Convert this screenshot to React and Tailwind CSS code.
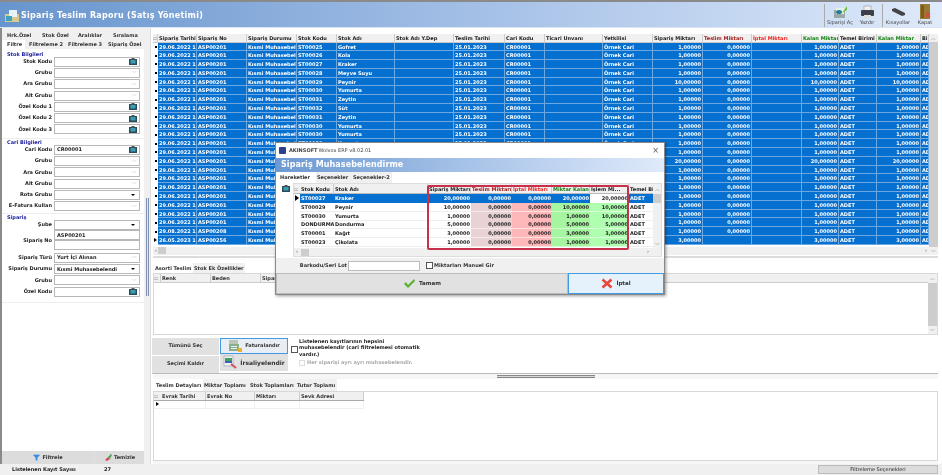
import { Filter } from 'lucide-react';

const MAIN_COLS = 'grid grid-cols-[5px_39px_50px_50px_40px_58px_59px_51px_40px_58px_50px_50px_49px_50px_37px_38px_44px_8px]';
const MODAL_COLS = 'grid grid-cols-[6px_34px_94px_43px_41px_40px_38px_39px_24px]';
const SUB_COLS = 'grid grid-cols-[7px_45px_49px_45px_64px]';
const ASORTI_COLS = 'grid grid-cols-[6px_50px_50px_50px]';

const mainHeaders = [
  ['Sipariş Tarihi'], ['Sipariş No'], ['Sipariş Durumu'], ['Stok Kodu'], ['Stok Adı'], ['Stok Adı Y.Dep'],
  ['Teslim Tarihi'], ['Cari Kodu'], ['Ticari Unvanı'], ['Yetkilisi'], ['Sipariş Miktarı'],
  ['Teslim Miktarı', 'text-[#a02020]'], ['İptal Miktarı', 'text-[#f02020]'], ['Kalan Miktar', 'text-[#108010]'],
  ['Temel Birimi'], ['Kalan Miktar', 'text-[#108010]'], ['Bi'],
];

const stock = [
  ['ST00025', 'Gofret', 1], ['ST00026', 'Kola', 1], ['ST00027', 'Kraker', 1], ['ST00028', 'Meyve Suyu', 1],
  ['ST00029', 'Peynir', 10], ['ST00030', 'Yumurta', 1], ['ST00031', 'Zeytin', 1], ['ST00032', 'Süt', 1],
  ['ST00031', 'Zeytin', 1], ['ST00030', 'Yumurta', 1], ['ST00030', 'Yumurta', 1], ['ST00030', 'Yumurta', 1],
  ['ST00029', 'Peynir', 1], ['ST00027', 'Kraker', 20], ['ST00030', 'Yumurta', 1], ['DONDURMA', 'Dondurma', 1],
  ['ST00001', 'Kağıt', 1], ['ST00023', 'Çikolata', 1], ['ST00031', 'Zeytin', 1], ['ST00032', 'Süt', 1],
  ['ST00025', 'Gofret', 1], ['ST00026', 'Kola', 1], ['ST00027', 'Kraker', 3],
];

const modalRows = [
  ['ST00027', 'Kraker', '20,00000', '20,00000', '20,00000'],
  ['ST00029', 'Peynir', '10,00000', '10,00000', '10,00000'],
  ['ST00030', 'Yumurta', '1,00000', '1,00000', '10,00000'],
  ['DONDURMA', 'Dondurma', '5,00000', '5,00000', '5,00000'],
  ['ST00001', 'Kağıt', '3,00000', '3,00000', '3,00000'],
  ['ST00023', 'Çikolata', '1,00000', '1,00000', '1,00000'],
];

const cell = 'overflow-hidden whitespace-nowrap px-px leading-[8px] border-r border-[#6ea8e0]';

const Lookup = () => (
  <svg width="8" height="7" viewBox="0 0 8 7" className="shrink-0">
    <rect x="0" y="1" width="8" height="6" fill="#2c4a5a" />
    <rect x="1.5" y="2" width="5" height="3.5" fill="#38a0b0" />
    <rect x="2.5" y="0" width="3" height="1.5" fill="#555" />
  </svg>
);

const FieldBox = ({ value, kind }) => (
  <div className="ml-[2px] w-[86px] h-[10px] bg-white border border-[#b8b8b8] flex items-center justify-between pl-[2px] pr-[2px]">
    <span className="text-[5px] font-bold text-[#222] leading-none whitespace-nowrap">{value}</span>
    {kind === 'lookup' && <Lookup />}
    {kind === 'chevron' && <span className="text-[#999] text-[5px] leading-none">﹀</span>}
    {kind === 'drop' && <span className="w-0 h-0 border-x-[2px] border-x-transparent border-t-[2px] border-t-black mr-[2px]" />}
  </div>
);

const Field = ({ label, value, kind }) => (
  <div className="flex items-center h-[11.3px]">
    <span className="w-[50px] shrink-0 text-right text-[5px] font-bold text-[#222] whitespace-nowrap">{label}</span>
    <FieldBox value={value} kind={kind} />
  </div>
);

const Legend = ({ children }) => (
  <div className="text-[5px] font-bold text-[#2020a0] pl-[5px] leading-[6px] h-[6px] -mb-px">{children}</div>
);

const Sidebar = () => (
  <aside className="w-[144px] shrink-0 flex flex-col border-l-2 border-[#8a8a8a]">
    <div className="flex-1 bg-white flex flex-col">
      <div className="bg-[#f0f0f0] pt-[3px] text-[5px] font-bold text-[#333]">
        <div className="h-[9px] flex items-center whitespace-nowrap">
          <span className="w-[40px] pl-[5px]">Hrk.Özel</span>
          <span className="w-[36px]">Stok Özel</span>
          <span className="w-[35px]">Aralıklar</span>
          <span>Sıralama</span>
        </div>
        <div className="h-[9px] flex items-center whitespace-nowrap">
          <span className="bg-white h-full flex items-center pl-[5px] w-[23px]">Filtre</span>
          <span className="w-[39px] pl-[4px]">Filtreleme 2</span>
          <span className="w-[40px] pl-[4px]">Filtreleme 3</span>
          <span className="pl-[4px]">Sipariş Özel</span>
        </div>
      </div>
      <div className="pt-[2px] flex flex-col">
        <div className="border-b border-[#eee] pb-[3px]">
          <Legend>Stok Bilgileri</Legend>
          <Field label="Stok Kodu" kind="lookup" />
          <Field label="Grubu" kind="chevron" />
          <Field label="Ara Grubu" kind="chevron" />
          <Field label="Alt Grubu" kind="chevron" />
          <Field label="Özel Kodu 1" kind="lookup" />
          <Field label="Özel Kodu 2" kind="lookup" />
          <Field label="Özel Kodu 3" kind="lookup" />
        </div>
        <div className="border-b border-[#eee] pb-[1px]">
          <Legend>Cari Bilgileri</Legend>
          <Field label="Cari Kodu" value="CR00001" kind="lookup" />
          <Field label="Grubu" kind="chevron" />
          <Field label="Ara Grubu" kind="chevron" />
          <Field label="Alt Grubu" kind="chevron" />
          <Field label="Rota Grubu" kind="drop" />
          <Field label="E-Fatura Kullan" kind="chevron" />
        </div>
        <div className="border-b border-[#eee] pb-[5px]">
          <Legend>Sipariş</Legend>
          <Field label="Şube" kind="drop" />
          <div className="flex items-center h-[22px]">
            <span className="w-[50px] shrink-0 text-right text-[5px] font-bold text-[#222] whitespace-nowrap">Sipariş No</span>
            <div className="flex flex-col self-start">
              <FieldBox value="ASP00201" />
              <FieldBox />
            </div>
          </div>
          <Field label="Sipariş Türü" value="Yurt İçi Alınan" kind="chevron" />
          <Field label="Sipariş Durumu" value="Kısmi Muhasebelendi" kind="drop" />
          <Field label="Grubu" kind="chevron" />
          <Field label="Özel Kodu" kind="lookup" />
        </div>
      </div>
    </div>
    <div className="h-[13px] flex gap-px bg-[#e0e0e0] text-[5px] font-bold text-[#333]">
      <div className="w-[92px] bg-[#dcdcdc] flex items-center justify-center gap-[2px]">
        <Filter size={7} className="text-[#3a8ee0] fill-[#3a8ee0]" />
        Filtrele
      </div>
      <div className="flex-1 bg-[#dcdcdc] flex items-center justify-center gap-[2px]">
        <svg width="8" height="7" viewBox="0 0 8 7">
          <path d="M1 6 L4 3 L6 5 L3 7 Z" fill="#d05050" />
          <path d="M4 3 L7 0 L8 1 L6 5 Z" fill="#50a060" />
        </svg>
        Temizle
      </div>
    </div>
  </aside>
);

const VBar = ({ thumbTop }) => (
  <div className="w-[9px] shrink-0 bg-[#f0f0f0] flex flex-col items-center text-[#555]">
    <span className="h-[8px] text-[5px] leading-[8px]">︿</span>
    <div className={`w-full flex-1 bg-[#cdcdcd] ${thumbTop ? 'mt-[1px]' : ''}`} />
    <span className="h-[8px] text-[5px] leading-[8px]">﹀</span>
  </div>
);

const MainGrid = () => (
  <div className="h-[221px] ml-[2px] mr-[4px] mt-[1.5px] flex bg-white">
    <div className="flex-1 min-w-0 flex flex-col">
      <div className={`${MAIN_COLS} h-[9px] bg-[#f0f0f0] border-b border-[#c8c8c8] text-[5px] font-bold text-[#222]`}>
        <span className="border-r border-[#ccc] text-[#888] leading-[8px]">::</span>
        {mainHeaders.map(([title, color], i) => (
          <span key={i} className={`overflow-hidden whitespace-nowrap px-px leading-[8px] border-r border-[#ccc] ${color || ''}`}>{title}</span>
        ))}
      </div>
      <div className="flex-1 min-h-0">
        {stock.map(([code, name, qty], i) => {
          const last = i === stock.length - 1;
          const order = i === 22 ? 'ASP00256' : i === 21 ? 'ASP00208' : 'ASP00201';
          const date = i === 22 ? '26.05.2023 16:14' : i === 21 ? '29.08.2022 13:02' : '29.06.2022 13:24';
          const amount = `${qty},00000`;
          return (
            <div key={i} className={`${MAIN_COLS} h-[8.8px] text-[5px] font-bold text-white`}>
              <span className="bg-white flex items-center justify-center">
                {last
                  ? <span className="w-0 h-0 border-y-[2px] border-y-transparent border-l-[3px] border-l-black" />
                  : <span className="w-[2px] h-[2px] bg-black" />}
              </span>
              {[date, order, 'Kısmi Muhasebelendi', code, name, '', '25.01.2023', 'CR00001', '', 'Örnek Cari'].map((v, k) => (
                <span key={k} className={`${cell} bg-[#0670d1] border-b`}>{v}</span>
              ))}
              <span className={`${cell} bg-[#0670d1] border-b text-right`}>{amount}</span>
              <span className={`${cell} bg-[#0670d1] border-b text-right`}>{last ? '' : '0,00000'}</span>
              <span className={`${cell} bg-[#0670d1] border-b`} />
              <span className={`${cell} bg-[#0670d1] border-b text-right`}>{amount}</span>
              <span className={`${cell} bg-[#0670d1] border-b`}>ADET</span>
              <span className={`${cell} bg-[#0670d1] border-b text-right`}>{amount}</span>
              <span className={`${cell} bg-[#0670d1] border-b`}>ADET</span>
            </div>
          );
        })}
      </div>
      <div className="h-[8px] bg-[#f0f0f0] flex items-center justify-between text-[#555] text-[5px] px-[2px]">
        <div className="flex items-center gap-[1px]"><span>‹</span><span className="w-[8px] h-[7px] bg-[#cdcdcd]" /></div>
        <span>›</span>
      </div>
    </div>
    <VBar />
  </div>
);

const AsortiPanel = () => (
  <div className="mt-[5px] ml-[2px] mr-[4px] h-[73px] flex flex-col bg-white">
    <div className="h-[10px] flex text-[5px] font-bold text-[#333] leading-[10px] bg-white whitespace-nowrap">
      <span className="pl-[2px] bg-white w-[40px]">Asorti Teslim</span>
      <span className="px-[1px] bg-[#f0f0f0]">Stok Ek Özellikler</span>
    </div>
    <div className="flex-1 flex border border-[#d8d8d8] mb-px">
      <div className="flex-1">
        <div className={`${ASORTI_COLS} h-[9px] bg-[#f0f0f0] border-b border-[#ccc] text-[5px] font-bold text-[#333] leading-[8px]`}>
          <span className="text-[#888]">::</span>
          <span className="px-px border-l border-[#ccc]">Renk</span>
          <span className="px-px border-l border-[#ccc]">Beden</span>
          <span className="px-px border-l border-[#ccc]">Sipariş</span>
        </div>
      </div>
      <VBar thumbTop />
    </div>
  </div>
);

const ActionButtons = () => (
  <div className="h-[38px] ml-[1px] mr-[4px] flex bg-white border-b border-[#bbb] text-[5px] font-bold text-[#333]">
    <div className="w-[67px] flex flex-col gap-px pt-[2px]">
      <div className="h-[17px] bg-[#e1e1e1] flex items-center justify-center">Tümünü Seç</div>
      <div className="h-[17px] bg-[#e1e1e1] flex items-center justify-center">Seçimi Kaldır</div>
    </div>
    <div className="w-[68px] flex flex-col pt-[2px] ml-px">
      <div className="h-[16px] bg-[#e8eef4] border border-[#3f9be6] flex items-center justify-center gap-[2px]">
        <svg width="15" height="14" viewBox="0 0 15 14">
          <rect x="1" y="1" width="9" height="5" fill="#b8c8b8" />
          <rect x="1" y="5" width="10" height="7" fill="#88b090" />
          <rect x="3" y="7" width="6" height="1" fill="#e8f0e8" />
          <rect x="3" y="9" width="6" height="1" fill="#e8f0e8" />
          <rect x="10" y="9" width="4" height="4" fill="#e8b030" />
        </svg>
        Faturalandır
      </div>
      <div className="h-[17px] bg-[#e1e1e1] flex items-center justify-center gap-[2px]">
        <svg width="15" height="14" viewBox="0 0 15 14">
          <rect x="1" y="1" width="9" height="10" fill="#f0f0f0" stroke="#8090a0" strokeWidth="0.5" />
          <rect x="2" y="3" width="7" height="5" fill="#40a060" />
          <rect x="2" y="6" width="7" height="2" fill="#4060c0" />
          <path d="M8 9 L13 13" stroke="#d05060" strokeWidth="2" />
        </svg>
        <span className="text-[6px]">İrsaliyelendir</span>
      </div>
    </div>
    <div className="flex pt-[2px] pl-[3px] w-[135px]">
      <span className="w-[7px] h-[7px] mt-[8px] bg-white border border-[#555] shrink-0" />
      <div className="pl-px">
        <p className="text-[5px] leading-[6.5px] text-[#222]">Listelenen kayıtlarının hepsini muhasebelendir (cari filtrelemesi otomatik vardır.)</p>
        <div className="flex items-center gap-[2px] mt-[2px] text-[#aaa] whitespace-nowrap">
          <span className="w-[6px] h-[6px] border border-[#ddd] shrink-0" />
          Her siparişi ayrı ayrı muhasebelendir.
        </div>
      </div>
    </div>
  </div>
);

const DetailPanel = () => (
  <div className="flex-1 ml-[2px] mr-[4px] flex flex-col bg-[#f6f6f6] pb-[3px]">
    <div className="h-[5px] flex justify-center items-center">
      <span className="w-[98px] h-[3px] bg-[#d8d8d8] border-y border-[#888]" />
    </div>
    <div className="h-[12px] flex text-[5px] font-bold text-[#333] leading-[12px] bg-white whitespace-nowrap">
      <span className="w-[50px] pl-[3px] bg-white">Teslim Detayları</span>
      <span className="w-[46px] pl-px bg-[#f0f0f0]">Miktar Toplamı</span>
      <span className="w-[47px] pl-px bg-[#f0f0f0]">Stok Toplamları</span>
      <span className="w-[41px] pl-px bg-[#f0f0f0]">Tutar Toplamı</span>
    </div>
    <div className="flex-1 bg-white border border-[#d8d8d8]">
      <div className={`${SUB_COLS} h-[9px] bg-[#f0f0f0] w-[210px] border-b border-[#aaa] text-[5px] font-bold text-[#333] leading-[8px]`}>
        <span className="text-[#888]">::</span>
        <span className="px-px border-r border-[#ccc]">Evrak Tarihi</span>
        <span className="px-px border-r border-[#ccc]">Evrak No</span>
        <span className="px-px border-r border-[#ccc]">Miktarı</span>
        <span className="px-px border-r border-[#ccc]">Sevk Adresi</span>
      </div>
      <div className={`${SUB_COLS} h-[8px] w-[210px] border-b border-[#f0f0f0]`}>
        <span className="flex items-center justify-center">
          <span className="w-0 h-0 border-y-[2.5px] border-y-transparent border-l-[3px] border-l-black" />
        </span>
        <span className="border-r border-[#f0f0f0]" />
        <span className="border-r border-[#f0f0f0]" />
        <span className="border-r border-[#f0f0f0]" />
        <span className="border-r border-[#f0f0f0]" />
      </div>
    </div>
  </div>
);

const ToolButton = ({ label, wide, children }) => (
  <div className={`flex flex-col items-center text-[5px] text-[#444] ${wide ? 'w-[30px]' : 'w-[24px]'}`}>
    <div className="h-[15px] flex items-center">{children}</div>
    <span className="whitespace-nowrap leading-[7px]">{label}</span>
  </div>
);

const Header = () => (
  <header className="h-[28px] shrink-0 border-t-2 border-[#8a8a8a] border-b border-b-[#d8e4f2] bg-gradient-to-r from-[#6795cd] via-[#a3bfe6] to-[#dfeafa] flex items-center">
    <svg width="16" height="14" viewBox="0 0 16 14" className="ml-[4px] mt-[2px]">
      <rect x="1" y="5" width="14" height="8" fill="#d8c890" />
      <rect x="5" y="1" width="8" height="7" fill="#e8f0f8" />
      <rect x="2" y="7" width="6" height="5" fill="#40a0c0" />
    </svg>
    <h1 className="ml-px mt-[2px] text-[8px] font-bold tracking-[0.26px] text-white whitespace-nowrap">Sipariş Teslim Raporu (Satış Yönetimi)</h1>
    <div className="ml-auto mr-[5px] mt-[2px] flex items-center h-[24px]">
      <div className="border-l border-[#aaa] h-[23px] flex">
        <ToolButton label="Siparişi Aç" wide>
          <svg width="15" height="14" viewBox="0 0 15 14">
            <rect x="1" y="5" width="11" height="8" fill="#9aa8a8" />
            <rect x="3" y="3" width="8" height="6" fill="#e8f0e8" />
            <path d="M9 8 L14 1 L14 5 Z" fill="#70c040" />
            <ellipse cx="6" cy="7" rx="3" ry="2" fill="#208090" />
          </svg>
        </ToolButton>
        <ToolButton label="Yazdır">
          <svg width="15" height="14" viewBox="0 0 15 14">
            <rect x="4" y="1" width="7" height="5" fill="#f0f0f0" stroke="#888" strokeWidth="0.5" />
            <rect x="1" y="5" width="13" height="6" rx="1" fill="#3a3f48" />
            <rect x="4" y="10" width="7" height="3" fill="#ddd" />
          </svg>
        </ToolButton>
      </div>
      <div className="border-l border-[#aaa] h-[23px] ml-[3px] flex">
        <ToolButton label="Kısayollar" wide>
          <svg width="15" height="14" viewBox="0 0 15 14">
            <path d="M1 4 L4 3 L14 8 L14 10 L11 11 L1 6 Z" fill="#444" />
          </svg>
        </ToolButton>
        <ToolButton label="Kapat">
          <svg width="12" height="15" viewBox="0 0 12 15">
            <rect x="1" y="0" width="10" height="15" fill="#9a7a30" />
            <rect x="2" y="1" width="3" height="13" fill="#7a5c20" />
            <path d="M7 9 L11 13 M11 9 L7 13" stroke="#e04040" strokeWidth="1.2" />
          </svg>
        </ToolButton>
      </div>
    </div>
  </header>
);

const ModalGrid = () => (
  <div className="h-[74px] flex flex-col border border-[#ddd] bg-white relative">
    <div className={`${MODAL_COLS} h-[10px] bg-[#f0f0f0] border-b border-[#bbb] text-[5px] font-bold text-[#222] leading-[10px] pr-[8px]`}>
      <span className="text-[#888]">::</span>
      <span className="px-px border-r border-[#ccc]">Stok Kodu</span>
      <span className="px-px border-r border-[#ccc]">Stok Adı</span>
      <span className="px-px border-r border-[#ccc] whitespace-nowrap overflow-hidden">Sipariş Miktarı</span>
      <span className="px-px border-r border-[#ccc] whitespace-nowrap overflow-hidden text-[#a02020]">Teslim Miktarı</span>
      <span className="px-px border-r border-[#ccc] whitespace-nowrap overflow-hidden text-[#f02020]">İptal Miktarı</span>
      <span className="px-px border-r border-[#ccc] whitespace-nowrap overflow-hidden text-[#108010]">Miktar Kalan</span>
      <span className="px-px border-r border-[#ccc] whitespace-nowrap overflow-hidden">İşlem Mi...</span>
      <span className="px-px whitespace-nowrap overflow-hidden">Temel Bi</span>
    </div>
    {modalRows.map(([code, name, qty, left, action], i) => {
      const sel = i === 0;
      return (
        <div key={i} className={`${MODAL_COLS} h-[8.8px] text-[5px] font-bold leading-[8px] ${sel ? 'text-white' : 'text-[#222]'} pr-[8px]`}>
          <span className="flex items-center justify-center bg-white">
            {sel && <span className="w-0 h-0 border-y-[3px] border-y-transparent border-l-[4px] border-l-black" />}
          </span>
          <span className={`px-px overflow-hidden whitespace-nowrap ${sel ? 'bg-[#0670d1]' : 'border-b border-[#eee]'}`}>{code}</span>
          <span className={`px-px ${sel ? 'bg-[#0670d1]' : 'border-b border-[#eee]'}`}>{name}</span>
          <span className={`px-px text-right ${sel ? 'bg-[#0670d1]' : 'border-b border-[#eee]'}`}>{qty}</span>
          <span className={`px-px text-right ${sel ? 'bg-[#0670d1]' : 'bg-[#e8d2d4] border-b border-[#f4eaea]'}`}>0,00000</span>
          <span className={`px-px text-right ${sel ? 'bg-[#0670d1]' : 'bg-[#ffb8ba] border-b border-[#ffdede]'}`}>0,00000</span>
          <span className={`px-px text-right ${sel ? 'bg-[#0670d1]' : 'bg-[#a6f5a0] border-b border-[#d2fad0]'}`}>{left}</span>
          <span className={`px-px text-right ${sel ? 'bg-white text-[#222]' : 'bg-[#b0ffb0] border-b border-[#d8ffd8]'}`}>{action}</span>
          <span className={`px-px ${sel ? 'bg-[#0670d1]' : 'border-b border-[#eee]'}`}>ADET</span>
        </div>
      );
    })}
    <div className="absolute right-0 top-0 bottom-0 w-[8px] bg-[#f0f0f0] flex flex-col items-center text-[#555] text-[5px]">
      <span className="leading-[10px]">︿</span>
      <span className="w-full h-[9px] bg-[#cdcdcd]" />
      <span className="mt-auto mb-[8px] leading-[8px]">﹀</span>
    </div>
    <div className="mt-auto h-[8px] bg-[#f0f0f0] flex items-center text-[#555] text-[5px] px-[2px]">
      <span>‹</span>
      <span className="ml-[3px] w-[8px] h-[7px] bg-[#cdcdcd]" />
      <span className="ml-auto mr-[10px]">›</span>
    </div>
    <div className="absolute left-[133px] top-[1px] w-[202px] h-[65px] border-2 border-[#c8304c] rounded-[2px]" />
  </div>
);

const Modal = () => (
  <div className="absolute left-[275px] top-[142px] w-[390px] h-[153px] bg-[#f0f0f0] border border-[#888] shadow-[1px_1px_3px_rgba(0,0,0,0.4)] flex flex-col">
    <div className="h-[15px] bg-white flex items-center px-[3px] text-[5px] text-[#444] shrink-0">
      <span className="w-[7px] h-[7px] rounded-[1px] bg-[#2e3f8f] mr-[3px]" />
      <span className="font-bold">AKINSOFT</span>
      <span className="ml-px">Wolvox ERP v8.02.01</span>
      <span className="ml-auto mr-[2px] text-[8px] leading-none text-[#555]">×</span>
    </div>
    <div className="h-[14px] bg-gradient-to-r from-[#6b99d2] via-[#a8c3e8] to-[#dfeafa] flex items-center pl-[5px] text-[8px] font-bold tracking-[0.1px] text-white shrink-0">
      Sipariş Muhasebelendirme
    </div>
    <div className="h-[11px] bg-white flex text-[5px] font-bold text-[#333] leading-[11px] shrink-0 whitespace-nowrap">
      <span className="w-[40px] pl-[4px]">Hareketler</span>
      <span className="w-[36px] pl-px bg-[#f0f0f0]">Seçenekler</span>
      <span className="w-[40px] pl-px bg-[#f0f0f0]">Seçenekler-2</span>
    </div>
    <div className="bg-white flex pr-[4px] pl-[6px] h-[75px]">
      <div className="w-[11px] pt-[2px] shrink-0"><Lookup /></div>
      <div className="flex-1"><ModalGrid /></div>
    </div>
    <div className="h-[15px] flex items-center text-[5px] font-bold text-[#333] shrink-0">
      <span className="w-[71px] text-right">Barkodu/Seri Lot</span>
      <span className="ml-px w-[72px] h-[10px] bg-white border border-[#bbb]" />
      <span className="ml-[6px] w-[7px] h-[7px] bg-white border border-[#555]" />
      <span className="ml-px">Miktarları Manuel Gir</span>
    </div>
    <div className="flex-1 flex text-[5.5px] font-bold text-[#333]">
      <div className="flex-1 bg-[#e1e1e1] border border-[#bbb] flex items-center justify-center gap-[3px]">
        <svg width="13" height="11" viewBox="0 0 13 11">
          <path d="M1 6 L3 4 L5 7 L11 1 L12 3 L5 10 Z" fill="#5cb030" />
        </svg>
        Tamam
      </div>
      <div className="w-[96px] bg-[#e5f1fb] border border-[#3f9be6] flex items-center justify-center gap-[3px]">
        <svg width="12" height="11" viewBox="0 0 12 11">
          <path d="M1.5 1.5 L10.5 9.5 M10.5 1.5 L1.5 9.5" stroke="#e8483c" strokeWidth="2.6" />
        </svg>
        İptal
      </div>
    </div>
  </div>
);

export default function App() {
  return (
    <div className="w-[942px] h-[475px] relative overflow-hidden flex flex-col bg-[#f0f0f0] blur-[0.3px] font-['DejaVu_Sans',sans-serif]">
      <Header />
      <div className="flex-1 min-h-0 flex">
        <Sidebar />
        <div className="w-[6px] shrink-0 flex justify-center pt-[170px]">
          <span className="w-[3px] h-[98px] bg-[#dde4ee] border-x border-[#8090b0]" />
        </div>
        <main className="flex-1 min-w-0 flex flex-col pt-[4px] bg-white border-l border-[#ddd]">
          <MainGrid />
          <div className="h-[2px] mt-px ml-[2px] mr-[4px] bg-[#dcdcdc]" />
          <AsortiPanel />
          <ActionButtons />
          <DetailPanel />
        </main>
      </div>
      <footer className="h-[11px] shrink-0 flex items-center text-[5px] font-bold text-[#222] bg-[#f0f0f0]">
        <span className="ml-[12px] w-[92px]">Listelenen Kayıt Sayısı</span>
        <span>27</span>
        <span className="ml-auto mr-[4px] w-[120px] h-[9px] bg-[#dcdcdc] border border-[#bbb] font-normal text-center leading-[7px]">Filtreleme Seçenekleri</span>
      </footer>
      <Modal />
    </div>
  );
}
